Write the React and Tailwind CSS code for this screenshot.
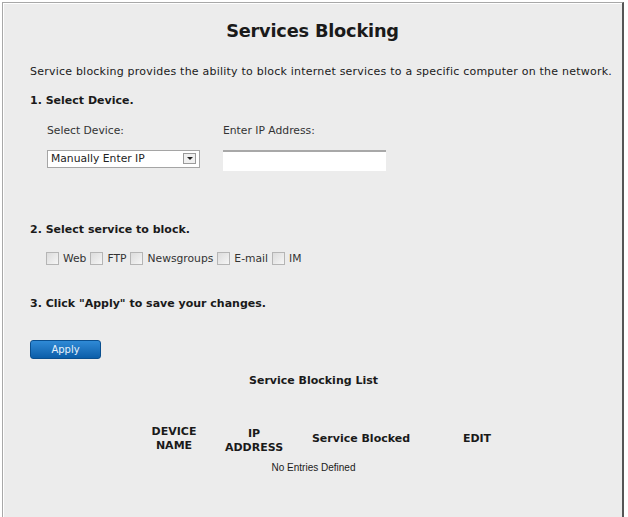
import React from 'react';

const services = ['Web', 'FTP', 'Newsgroups', 'E-mail', 'IM'];

const Checkbox = ({ label }) => (
  <label className="flex items-center gap-[4px] mr-[4px]">
    <span className="w-[13px] h-[13px] border border-[#b5b5b5] bg-gradient-to-br from-[#dcdcdc] to-[#f6f6f6]" />
    <span>{label}</span>
  </label>
);

export default function App() {
  return (
    <div className="w-[628px] h-[517px] bg-white pt-[2px] pl-[2px] font-['DejaVu_Sans',sans-serif] text-[#1a1a1a]">
      <div className="w-[622px] h-[515px] bg-[#ececec] border-l border-t border-[#a8a8a8] border-r-2 border-r-[#555] shadow-[inset_1px_1px_0_#fff]">
        {/* Header */}
        <h1 className="pt-[15px] text-center text-[17.75px] font-bold tracking-[-0.2px]">Services Blocking</h1>

        <p className="mt-[19px] pl-[27px] text-[11px] tracking-[0.22px] leading-[16px]">
          Service blocking provides the ability to block internet services to a specific computer on the network.
        </p>

        {/* Step 1 */}
        <h2 className="mt-[13px] pl-[27px] text-[11px] font-bold leading-[16px]">1. Select Device.</h2>
        <div className="mt-[14px] pl-[44px] flex gap-[23px] text-[10.75px] leading-[16px] text-[#333]">
          <div className="w-[153px]">
            <div>Select Device:</div>
            <div className="mt-[11px] h-[18px] border border-[#a5a5a5] bg-white flex items-center justify-between pl-[3px] pr-[3px]">
              <span className="text-[#222]">Manually Enter IP</span>
              <span className="w-[13px] h-[11px] border border-[#9a9a9a] bg-[#f0f0f0] flex items-center justify-center">
                <span className="w-0 h-0 border-l-[3px] border-r-[3px] border-t-[3px] border-l-transparent border-r-transparent border-t-[#222]" />
              </span>
            </div>
          </div>
          <div>
            <div>Enter IP Address:</div>
            <div className="mt-[11px] w-[163px] h-[21px] border-t-2 border-t-[#a8a8a8] bg-white" />
          </div>
        </div>

        {/* Step 2 */}
        <h2 className="mt-[51px] pl-[27px] text-[11px] font-bold leading-[16px]">2. Select service to block.</h2>
        <div className="mt-[13px] pl-[43px] flex items-center text-[10.75px] leading-[16px] text-[#333]">
          {services.map(s => (
            <Checkbox key={s} label={s} />
          ))}
        </div>

        {/* Step 3 */}
        <h2 className="mt-[29px] pl-[27px] text-[11px] font-bold leading-[16px]">3. Click "Apply" to save your changes.</h2>
        <div className="mt-[24px] pl-[27px]">
          <button className="w-[71px] h-[19px] rounded-[3px] bg-gradient-to-b from-[#2f8ad6] to-[#0a5ea9] text-[#e8f2fb] text-[10px] border border-[#0a4f8f]">
            Apply
          </button>
        </div>

        {/* List */}
        <h3 className="mt-[13px] text-center text-[11px] font-bold leading-[16px] pl-[2px]">Service Blocking List</h3>
        <div className="mt-[34px] pl-[142px] flex items-center text-[11px] font-bold text-center leading-[14px]">
          <div className="w-[58px]">DEVICE<br />NAME</div>
          <div className="w-[102px] pt-[4px]">IP<br />ADDRESS</div>
          <div className="w-[112px]">Service Blocked</div>
          <div className="w-[120px]">EDIT</div>
        </div>
        <p className="mt-[6px] text-center text-[10px] leading-[14px] font-['Liberation_Sans',sans-serif] pl-[2px]">No Entries Defined</p>
      </div>
    </div>
  );
}
